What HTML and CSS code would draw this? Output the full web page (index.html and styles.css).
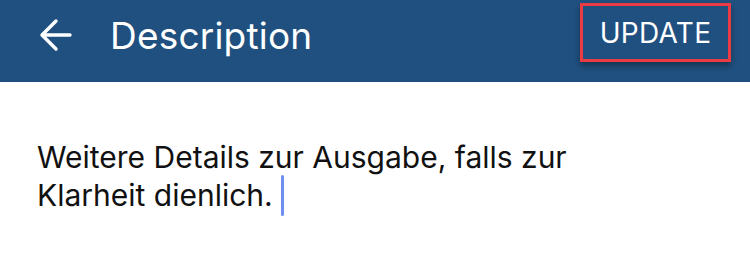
FILE: index.html
```html
<!DOCTYPE html>
<html lang="en">
<head>
    <meta charset="UTF-8">
    <meta name="viewport" content="width=device-width, initial-scale=1.0">
    <title>Description</title>
    <link rel="stylesheet" href="styles.css">
</head>
<body>
    <div class="topbar">
        <div class="topbar-left">
            <svg class="back-icon" width="34" height="34" viewBox="0 0 34 34">
                <path d="M31 17H4M17 3L3 17l14 14" fill="none" stroke="#fff" stroke-width="3.4" stroke-linecap="round" stroke-linejoin="round"/>
            </svg>
            <span class="title">Description</span>
        </div>
        <div class="update-btn">UPDATE</div>
    </div>

    <div class="content">
        <p class="desc">Weitere Details zur Ausgabe, falls zur<br>Klarheit dienlich.<span class="cursor"></span></p>
    </div>
</body>
</html>
```

FILE: styles.css
```css
body {
    margin: 0;
    background: #fff;
    font-family: Inter, "Noto Sans", sans-serif;
}
.topbar {
    height: 82px;
    background: #20507f;
    display: flex;
    align-items: center;
    justify-content: space-between;
    color: #fff;
}
.topbar-left {
    display: flex;
    align-items: center;
    padding-left: 39px;
    margin-top: -12px;
}
.back-icon {
    display: block;
}
.title {
    font-size: 37px;
    margin-left: 37px;
    letter-spacing: 0.2px;
}
.update-btn {
    margin-right: 19px;
    margin-top: -17px;
    width: 145px;
    height: 53px;
    border: 3px solid #ec3c43;
    box-shadow: 0 4px 6px rgba(0, 0, 0, 0.35);
    display: flex;
    align-items: center;
    justify-content: center;
    font-size: 28px;
    letter-spacing: 0.3px;
}
.content {
    padding: 58px 0 0 37px;
}
.desc {
    margin: 0;
    font-size: 30px;
    line-height: 35px;
    color: #111;
}
.cursor {
    display: inline-block;
    width: 3px;
    height: 41px;
    margin-left: 8px;
    background: #6e8ff0;
    border-radius: 2px;
    vertical-align: -10px;
}
```
